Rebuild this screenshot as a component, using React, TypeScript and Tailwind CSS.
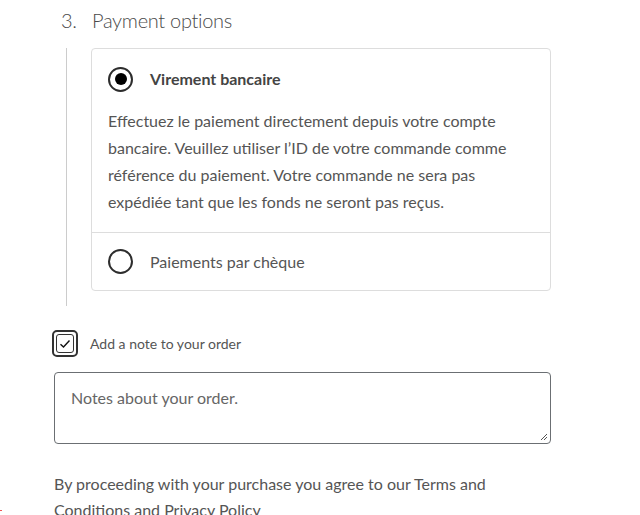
import React from "react";

const font = { fontFamily: "Lato, 'Noto Sans', sans-serif" };

export default function App() {
  return (
    <div className="w-[640px] h-[515px] overflow-hidden bg-white relative text-[#555]" style={font}>
      <div className="pl-[61px] pt-[6px] flex items-baseline text-[20px] tracking-[-0.3px] font-light text-[#4a4a4a] leading-[28px]">
        <span className="w-[31px]">3.</span>
        <span>Payment options</span>
      </div>
      <div className="ml-[66px] mt-[14px] border-l border-[#ccc] pl-[24px] pb-[15px] w-[485px]">
        <div className="border border-[#ddd] rounded-[4px]">
          <div className="px-[16px] pt-[17px] pb-[17px]">
            <label className="flex items-center gap-[17px] h-[26px]">
              <span className="w-[25px] h-[25px] rounded-full border-2 border-[#2d2d2d] flex items-center justify-center">
                <span className="w-[12px] h-[12px] rounded-full bg-black" />
              </span>
              <span className="font-bold text-[16px] text-[#444]">Virement bancaire</span>
            </label>
            <p className="mt-[15px] text-[16px] leading-[27px] text-[#555] pr-[10px]">
              Effectuez le paiement directement depuis votre compte bancaire. Veuillez utiliser l’ID de votre commande comme référence du paiement. Votre commande ne sera pas expédiée tant que les fonds ne seront pas reçus.
            </p>
          </div>
          <div className="border-t border-[#ddd] px-[16px] h-[58px] flex items-center gap-[17px]">
            <span className="w-[25px] h-[25px] rounded-full border-2 border-[#2d2d2d]" />
            <span className="text-[16px] text-[#555]">Paiements par chèque</span>
          </div>
        </div>
      </div>
      <div className="ml-[52px] mt-[24px] flex items-center gap-[12px]">
        <span className="w-[26px] h-[27px] rounded-[5px] border-2 border-[#333] p-[2px] flex">
          <span className="flex-1 rounded-[3px] border border-[#333] flex items-center justify-center">
            <svg width="12" height="10" viewBox="0 0 12 10">
              <path d="M1.5 5.2 L4.5 8 L10.5 1.5" fill="none" stroke="#111" strokeWidth="1.4" />
            </svg>
          </span>
        </span>
        <span className="text-[14px] text-[#555]">Add a note to your order</span>
      </div>
      <div className="ml-[54px] mt-[15px] w-[497px] h-[72px] border-[1.5px] border-[#6b6f73] rounded-[4px] relative px-[16px] pt-[13px]">
        <span className="text-[16px] text-[#666]">Notes about your order.</span>
        <svg className="absolute right-[2px] bottom-[2px]" width="8" height="8" viewBox="0 0 8 8">
          <path d="M7 1 L1 7 M7 4 L4 7" stroke="#555" strokeWidth="1" />
        </svg>
      </div>
      <p className="ml-[54px] mt-[27px] w-[460px] text-[16px] leading-[26px] text-[#555]">
        By proceeding with your purchase you agree to our Terms and Conditions and Privacy Policy
      </p>
      <span className="absolute left-0 top-[510px] w-[2px] h-[1px] bg-[#e55]" />
    </div>
  );
}
